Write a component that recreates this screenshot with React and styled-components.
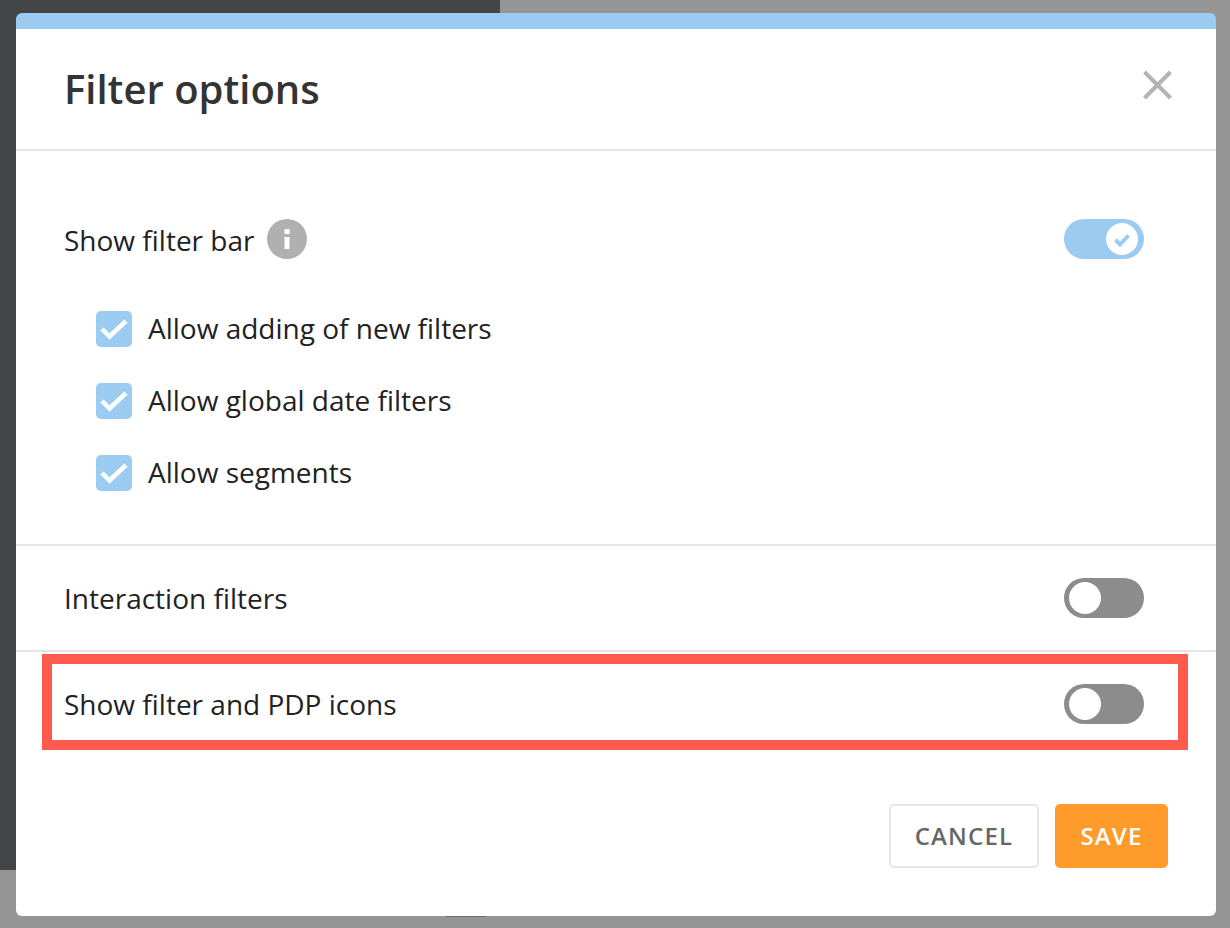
import React from "react";
import styled, { createGlobalStyle } from "styled-components";

const GlobalStyle = createGlobalStyle`
  html, body {
    margin: 0;
    padding: 0;
    background: #959595;
    font-family: "Open Sans", "Liberation Sans", sans-serif;
  }
`;

const Page = styled.div`
  position: relative;
  width: 1230px;
  height: 928px;
  overflow: hidden;
  background: #959595;
`;

const DarkPanel = styled.div`
  width: 500px;
  height: 870px;
  background: #444547;
`;

const Modal = styled.div`
  position: absolute;
  left: 16px;
  top: 13px;
  width: 1200px;
  height: 903px;
  display: flex;
  flex-direction: column;
  background: #fff;
  border-top: 16px solid #9bcbf0;
  border-radius: 6px;
  box-sizing: border-box;
`;

const Notch = styled.div`
  position: absolute;
  left: 430px;
  bottom: -1px;
  width: 40px;
  height: 1px;
  background: #6a6a6a;
`;

const Header = styled.div`
  height: 120px;
  flex: none;
  display: flex;
  align-items: center;
  justify-content: space-between;
  padding: 0 44px 0 48px;
  border-bottom: 2px solid #e5e5e5;
`;

const Title = styled.h1`
  margin: -2px 0 0;
  font-size: 40px;
  font-weight: 600;
  color: #333;
`;

const CloseButton = styled.button`
  width: 30px;
  height: 30px;
  margin-top: -8px;
  padding: 0;
  display: flex;
  border: 0;
  background: none;
`;

const Section = styled.div`
  display: flex;
  flex-direction: column;
  padding: ${(p) => p.$padding || "0 72px 0 48px"};
  border-bottom: 2px solid #e5e5e5;
`;

const Row = styled.div`
  display: flex;
  align-items: center;
  justify-content: space-between;
  height: ${(p) => p.$height || 104}px;
`;

const Label = styled.span`
  font-size: 28px;
  line-height: 40px;
  color: #222;
`;

const LabelGroup = styled.div`
  display: flex;
  align-items: center;
  gap: 13px;
`;

const GroupLabel = styled(Label)`
  margin-top: 2px;
`;

const CheckLabel = styled(Label)`
  margin-top: -2px;
`;

const InfoIcon = styled.svg`
  display: block;
  width: 40px;
  height: 40px;
`;

const CheckList = styled.div`
  display: flex;
  flex-direction: column;
  gap: 36px;
  margin: 12px 0 53px 32px;
`;

const CheckRow = styled.label`
  display: flex;
  align-items: center;
  gap: 16px;
  height: 36px;
`;

const CheckBox = styled.span`
  display: flex;
  width: 36px;
  height: 36px;
  border-radius: 5px;
  background: #9bcbf0;
`;

const Track = styled.span`
  position: relative;
  display: block;
  width: 80px;
  height: 40px;
  border-radius: 20px;
  background: ${(p) => (p.$on ? "#9bcbf0" : "#8c8c8c")};
`;

const Knob = styled.span`
  position: absolute;
  top: 4px;
  left: ${(p) => (p.$on ? 42 : 5)}px;
  width: 32px;
  height: 32px;
  display: flex;
  border-radius: 50%;
  background: #fff;
`;

const Highlight = styled.div`
  display: flex;
  align-items: center;
  justify-content: space-between;
  box-sizing: border-box;
  height: 96px;
  margin: 2px 28px 0 26px;
  padding: 4px 34px 0 12px;
  border: 10px solid #ff5a4e;
`;

const Footer = styled.div`
  display: flex;
  justify-content: flex-end;
  gap: 16px;
  padding: 54px 48px 0 0;
`;

const Button = styled.button`
  height: 64px;
  width: ${(p) => (p.$primary ? 113 : 150)}px;
  box-sizing: border-box;
  padding: 0 0 2px;
  border-radius: 5px;
  border: ${(p) => (p.$primary ? "0" : "2px solid #e6e6e6")};
  background: ${(p) => (p.$primary ? "#ff9b2b" : "#fff")};
  color: ${(p) => (p.$primary ? "#fff" : "#666")};
  font-family: inherit;
  font-size: 24px;
  font-weight: 600;
  letter-spacing: 1.2px;
`;

const Toggle = ({ on }) => (
  <Track $on={on}>
    <Knob $on={on}>
      {on && (
        <svg viewBox="0 0 32 32" width="32" height="32">
          <path d="M9.5 17l4.5 4.5 8.5-9" fill="none" stroke="#9bcbf0" strokeWidth="4" />
        </svg>
      )}
    </Knob>
  </Track>
);

const Check = ({ label }) => (
  <CheckRow>
    <CheckBox>
      <svg viewBox="0 0 36 36" width="36" height="36">
        <path d="M6 18l7.5 7.5L30 10" fill="none" stroke="#fff" strokeWidth="4.5" />
      </svg>
    </CheckBox>
    <CheckLabel>{label}</CheckLabel>
  </CheckRow>
);

export default function App() {
  return (
    <Page>
      <GlobalStyle />
      <DarkPanel />
      <Modal>
        <Notch />
        <Header>
          <Title>Filter options</Title>
          <CloseButton aria-label="Close">
            <svg viewBox="0 0 30 30" width="30" height="30">
              <path d="M2.5 2l26 26M28.5 2L2.5 28" fill="none" stroke="#b3b3b3" strokeWidth="4" />
            </svg>
          </CloseButton>
        </Header>
        <Section $padding="28px 72px 0 48px">
          <Row $height={120}>
            <LabelGroup>
              <GroupLabel>Show filter bar</GroupLabel>
              <InfoIcon viewBox="0 0 40 40">
                <circle cx="20" cy="20" r="20" fill="#b0b0b0" />
                <rect x="17.5" y="10" width="5" height="5" fill="#fff" />
                <rect x="17.5" y="18" width="5" height="12" fill="#fff" />
              </InfoIcon>
            </LabelGroup>
            <Toggle on />
          </Row>
          <CheckList>
            <Check label="Allow adding of new filters" />
            <Check label="Allow global date filters" />
            <Check label="Allow segments" />
          </CheckList>
        </Section>
        <Section>
          <Row>
            <Label>Interaction filters</Label>
            <Toggle />
          </Row>
        </Section>
        <Highlight>
          <Label>Show filter and PDP icons</Label>
          <Toggle />
        </Highlight>
        <Footer>
          <Button>CANCEL</Button>
          <Button $primary>SAVE</Button>
        </Footer>
      </Modal>
    </Page>
  );
}
